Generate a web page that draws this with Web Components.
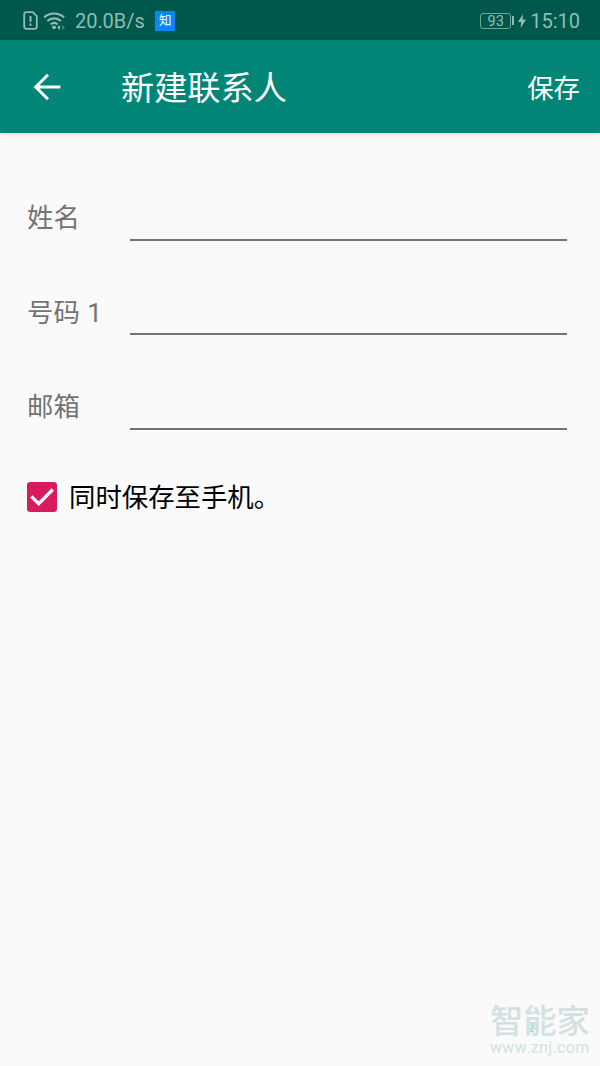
<!DOCTYPE html>
<html lang="zh-CN">
<head>
<meta charset="utf-8">
<title>新建联系人</title>
<style>
  body {
    margin: 0;
    background: #fafafa;
    font-family: Roboto, "Noto Sans CJK SC", sans-serif;
  }
</style>
</head>
<body>
<contact-page></contact-page>

<script>
// status-bar: network speed on the left, battery and clock on the right

class StatusBar extends HTMLElement {
  constructor() {
    super();
    this.attachShadow({ mode: 'open' });
  }

  connectedCallback() {
    this.shadowRoot.innerHTML = `
      <style>
        :host {
          display: flex;
          justify-content: space-between;
          align-items: center;
          height: 40px;
          box-sizing: border-box;
          padding: 1px 20px 0 23px;
          background: #00574b;
          color: #91bcb4;
          font-size: 20px;
          line-height: 24px;
        }
        div {
          display: flex;
          align-items: center;
        }
        svg {
          display: block;
        }
        .wifi {
          margin-left: 5px;
        }
        .speed {
          margin-left: 9px;
          letter-spacing: -0.05px;
        }
        .badge {
          width: 20px;
          height: 20px;
          margin-left: 10.5px;
          background: #0c86f2;
          color: #fff;
          font-size: 12.5px;
          line-height: 20px;
          text-align: center;
        }
        .battery {
          width: 29px;
          height: 14px;
          border: 1px solid #6fa59c;
          border-radius: 3px;
          font-size: 14.5px;
          line-height: 16px;
          justify-content: center;
        }
        .battery span {
          padding-top: 2px;
        }
        .cap {
          width: 2px;
          height: 9px;
          margin-left: 1px;
          background: #91bcb4;
        }
        .bolt {
          margin-left: 4px;
        }
        .time {
          margin-left: 4px;
        }
      </style>
      <div>
        <svg width="15" height="19" viewBox="0 0 15 19" fill="none" stroke="#91bcb4" stroke-width="1.8">
          <path d="M3 1.2h6.8l4 4v10.6a2 2 0 0 1-2 2H3.2a2 2 0 0 1-2-2V3a1.8 1.8 0 0 1 1.8-1.8z"/>
          <path d="M7.5 5v6M7.5 12.6v2.2" stroke-width="2"/>
        </svg>
        <svg class="wifi" width="23" height="19" viewBox="0 0 23 19" fill="none" stroke="#91bcb4" stroke-width="2.2">
          <path d="M1.2 6.4a14.5 14.5 0 0 1 19.8 0M4.4 10a9.8 9.8 0 0 1 13.4 0M7.7 13.3a5.2 5.2 0 0 1 6.8 0"/>
          <circle cx="11" cy="16.3" r="1.9" fill="#91bcb4" stroke="none"/>
          <path d="M17 14v5l-3-2.5z" fill="#91bcb4" stroke="none"/>
          <path d="M19 14v5l3-2.5z" fill="#468a7f" stroke="none"/>
        </svg>
        <span class="speed">20.0B/s</span>
        <span class="badge">知</span>
      </div>
      <div>
        <div class="battery"><span>93</span></div>
        <span class="cap"></span>
        <svg class="bolt" width="8" height="14" viewBox="0 0 8 14" fill="#91bcb4">
          <path d="M5 0L0 8h3.2L2.6 14 8 5.5H4.6z"/>
        </svg>
        <span class="time">15:10</span>
      </div>
    `;
  }
}

customElements.define('status-bar', StatusBar);

// app-bar: title comes in the default slot, the action in its own

class AppBar extends HTMLElement {
  constructor() {
    super();
    this.attachShadow({ mode: 'open' });
  }

  connectedCallback() {
    this.shadowRoot.innerHTML = `
      <style>
        :host {
          display: flex;
          align-items: center;
          height: 93.4px;
          box-sizing: border-box;
          padding: 0 20px 0 33px;
          background: #008577;
          color: #fff;
          box-shadow: 0 1px 5px rgba(0, 0, 0, 0.15);
        }
        svg {
          display: block;
        }
        h1 {
          flex: 1;
          margin: 0 0 0 60px;
          padding-top: 5px;
          font-size: 33.2px;
          font-weight: 400;
          line-height: 48px;
        }
        .action {
          padding-top: 4px;
          font-size: 26.4px;
          line-height: 40px;
        }
      </style>
      <svg width="28" height="28" viewBox="0 0 28 28" fill="none" stroke="#fff" stroke-width="3">
        <path d="M27.4 14H3M15 1.8L2.8 14 15 26.2"/>
      </svg>
      <h1><slot></slot></h1>
      <span class="action"><slot name="action"></slot></span>
    `;
  }
}

customElements.define('app-bar', AppBar);

// form-field: label with an underlined text input

class FormField extends HTMLElement {
  constructor() {
    super();
    this.attachShadow({ mode: 'open' });
  }

  connectedCallback() {
    const label = this.getAttribute('label');

    this.shadowRoot.innerHTML = `
      <style>
        :host {
          display: block;
          height: 94.5px;
        }
        label {
          display: flex;
          align-items: flex-start;
        }
        span {
          width: 103px;
          padding-top: 1.5px;
          color: #737373;
          font-size: 26.4px;
          line-height: 40px;
          word-spacing: 1px;
        }
        input {
          flex: 1;
          min-width: 0;
          height: 44px;
          box-sizing: border-box;
          padding: 0;
          border: 0;
          border-bottom: 2px solid #737373;
          border-radius: 0;
          background: none;
          font: inherit;
          font-size: 26.4px;
          outline: none;
        }
      </style>
      <label>
        <span>${label}</span>
        <input type="text">
      </label>
    `;
  }
}

customElements.define('form-field', FormField);

class CheckOption extends HTMLElement {
  constructor() {
    super();
    this.attachShadow({ mode: 'open' });
  }

  connectedCallback() {
    this.shadowRoot.innerHTML = `
      <style>
        :host {
          display: flex;
          align-items: center;
          gap: 12px;
          color: #000;
          font-size: 26.4px;
          line-height: 40px;
        }
        svg {
          display: block;
        }
        span {
          padding-top: 3px;
        }
      </style>
      <svg width="30" height="30" viewBox="0 0 30 30">
        <rect width="30" height="30" rx="3.3" fill="#d81b60"/>
        <path d="M4.3 14.5l7.4 7.2L25.8 7.5" fill="none" stroke="#fff" stroke-width="3.2"/>
      </svg>
      <span><slot></slot></span>
    `;
  }
}

customElements.define('check-option', CheckOption);

class SiteMark extends HTMLElement {
  constructor() {
    super();
    this.attachShadow({ mode: 'open' });
  }

  connectedCallback() {
    this.shadowRoot.innerHTML = `
      <style>
        :host {
          display: flex;
          flex-direction: column;
          position: relative;
          width: 100px;
          color: #d3e2e1;
        }
        .name {
          font-family: "Liberation Sans", "Noto Sans CJK SC", sans-serif;
          font-size: 33.3px;
          font-weight: 500;
          line-height: 32px;
          white-space: nowrap;
        }
        .url {
          font-family: Roboto, sans-serif;
          font-size: 16px;
          letter-spacing: 0.35px;
          line-height: 20px;
          white-space: nowrap;
        }
        /* teal accent over the middle character */
        svg {
          position: absolute;
          left: 39px;
          top: 18px;
        }
      </style>
      <span class="name">智能家</span>
      <span class="url">www.znj.com</span>
      <svg width="7" height="9" viewBox="0 0 7 9" fill="none" stroke="#9fe0d8" stroke-width="1.3">
        <path d="M1 1.5h4L1.5 7.5H5"/>
      </svg>
    `;
  }
}

customElements.define('site-mark', SiteMark);

class ContactPage extends HTMLElement {
  constructor() {
    super();
    this.attachShadow({ mode: 'open' });
  }

  connectedCallback() {
    this.shadowRoot.innerHTML = `
      <style>
        :host {
          display: flex;
          flex-direction: column;
          height: 1066px;
          overflow: hidden;
        }
        main {
          flex: 1;
          padding: 63.6px 33px 0 27px;
        }
        check-option {
          margin-top: -5px;
        }
        site-mark {
          align-self: flex-end;
          margin: 0 10px 8px 0;
        }
      </style>
      <status-bar></status-bar>
      <app-bar>新建联系人<span slot="action">保存</span></app-bar>
      <main>
        <form-field label="姓名"></form-field>
        <form-field label="号码 1"></form-field>
        <form-field label="邮箱"></form-field>
        <check-option>同时保存至手机。</check-option>
      </main>
      <site-mark></site-mark>
    `;
  }
}

customElements.define('contact-page', ContactPage);
</script>
</body>
</html>
